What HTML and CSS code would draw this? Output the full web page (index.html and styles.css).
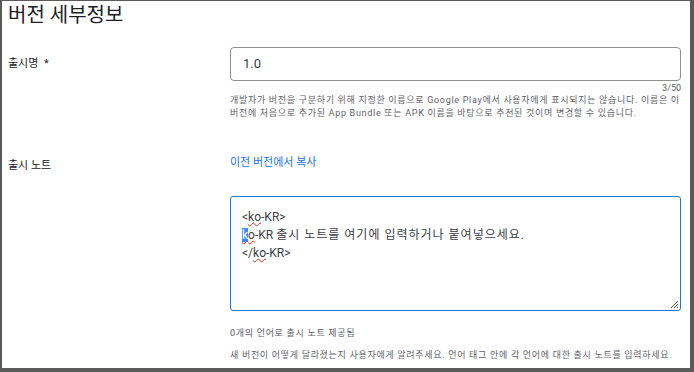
FILE: index.html
```html
<!DOCTYPE html>
<html lang="ko">
<head>
<meta charset="UTF-8">
<title>버전 세부정보</title>
<link rel="stylesheet" href="styles.css">
</head>
<body>
<div class="frame">
    <h1 class="title">버전 세부정보</h1>

    <!-- 출시명 -->
    <div class="row row-name">
        <div class="label">출시명 <span class="req">*</span></div>
        <div class="field">
            <div class="input">1.0</div>
            <div class="counter">3/50</div>
            <div class="help">개발자가 버전을 구분하기 위해 지정한 이름으로 Google Play에서 사용자에게 표시되지는 않습니다. 이름은 이 버전에 처음으로 추가된 App Bundle 또는 APK 이름을 바탕으로 추천된 것이며 변경할 수 있습니다.</div>
        </div>
    </div>

    <!-- 출시 노트 -->
    <div class="row row-notes">
        <div class="label">출시 노트</div>
        <div class="field">
            <a class="copy-link">이전 버전에서 복사</a>
            <div class="textarea">
                <div class="line">&lt;<span class="typo">ko</span>-KR&gt;</div>
                <div class="line"><span class="typo"><span class="sel">k</span>o</span>-KR <span class="ko">출시 노트를 여기에 입력하거나 붙여넣으세요.</span></div>
                <div class="line">&lt;/<span class="typo">ko</span>-KR&gt;</div>
                <svg class="grip" width="9" height="9" viewBox="0 0 9 9">
                    <path d="M8 1L1 8M8 4L4 8M8 7L7 8" stroke="#555" stroke-width="1"/>
                </svg>
            </div>
            <div class="note-count">0개의 언어로 출시 노트 제공됨</div>
            <div class="help help-last">새 버전이 어떻게 달라졌는지 사용자에게 알려주세요. 언어 태그 안에 각 언어에 대한 출시 노트를 입력하세요.</div>
        </div>
    </div>
</div>
</body>
</html>
```

FILE: styles.css
```css
/* 기본 */
body, html {
    margin: 0;
    padding: 0;
    background: #fff;
}

.frame {
    box-sizing: border-box;
    width: 694px;
    height: 372px;
    border-style: solid;
    border-color: #5a5a5a;
    border-width: 1px 4px 4px 2px;
    padding: 0 9px 0 6px;
    font-family: Roboto, "Noto Sans CJK KR", sans-serif;
    color: #202124;
    overflow: hidden;
}

.title {
    margin: 0;
    padding-top: 1px;
    font-size: 20px;
    font-weight: 400;
    line-height: 26px;
}

.row {
    display: flex;
}

.label {
    width: 222px;
    font-size: 11px;
    color: #202124;
}

.req {
    margin-left: 3px;
}

.field {
    flex: 1;
}

/* 출시명 */
.row-name {
    margin-top: 19px;
}

.row-name .label {
    padding-top: 7px;
}

.input {
    box-sizing: border-box;
    height: 34px;
    border: 1px solid #8f8f8f;
    border-radius: 4px;
    padding: 0 12px;
    font-size: 13px;
    line-height: 32px;
    color: #3c4043;
}

.counter {
    text-align: right;
    font-size: 9px;
    line-height: 12px;
    margin-top: 1px;
    color: #5f6368;
}

.help {
    font-size: 9px;
    line-height: 13px;
    letter-spacing: 0.7px;
    color: #5f6368;
}

/* 출시 노트 */
.row-notes {
    margin-top: 36px;
}

.copy-link {
    display: block;
    font-size: 11px;
    line-height: 14px;
    color: #1a73e8;
}

.textarea {
    position: relative;
    box-sizing: border-box;
    height: 115px;
    margin-top: 26px;
    border: 1px solid #1a73e8;
    border-radius: 3px;
    padding: 11px 11px;
    font-size: 12px;
    line-height: 18px;
    color: #3c4043;
}

.ko {
    letter-spacing: 1px;
}

.typo {
    text-decoration: underline wavy #d93025;
    text-decoration-thickness: 1px;
}

.sel {
    background: #3d8cf0;
    color: #fff;
}

.grip {
    position: absolute;
    right: 1px;
    bottom: 1px;
}

.note-count {
    margin-top: 16px;
    font-size: 9px;
    line-height: 13px;
    letter-spacing: 0.7px;
    color: #5f6368;
}

.help-last {
    margin-top: 9px;
}
```
